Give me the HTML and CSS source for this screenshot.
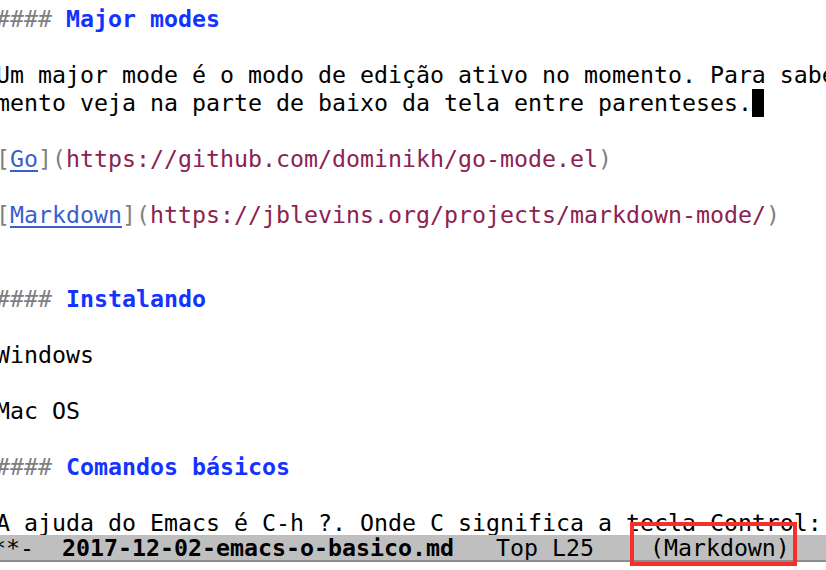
FILE: index.html
```html
<!DOCTYPE html>
<html lang="pt">
<head>
<meta charset="utf-8">
<title>emacs - markdown</title>
<link rel="stylesheet" href="styles.css">
</head>
<body>
<div class="frame">
  <div class="buffer">
    <div class="line"><span class="markup">####</span> <span class="heading">Major modes</span></div>
    <div class="line"> </div>
    <div class="line">Um major mode é o modo de edição ativo no momento. Para saber qual o major mode ativo no mo</div>
    <div class="line">mento veja na parte de baixo da tela entre parenteses.<span class="cursor"></span></div>
    <div class="line"> </div>
    <div class="line"><span class="markup">[</span><span class="link">Go</span><span class="markup">](</span><span class="url">https://github.com/dominikh/go-mode.el</span><span class="markup">)</span></div>
    <div class="line"> </div>
    <div class="line"><span class="markup">[</span><span class="link">Markdown</span><span class="markup">](</span><span class="url">https://jblevins.org/projects/markdown-mode/</span><span class="markup">)</span></div>
    <div class="line"> </div>
    <div class="line"> </div>
    <div class="line"><span class="markup">####</span> <span class="heading">Instalando</span></div>
    <div class="line"> </div>
    <div class="line">Windows</div>
    <div class="line"> </div>
    <div class="line">Mac OS</div>
    <div class="line"> </div>
    <div class="line"><span class="markup">####</span> <span class="heading">Comandos básicos</span></div>
    <div class="line"> </div>
    <div class="line">A ajuda do Emacs é C-h ?. Onde C significa a tecla Control: Ctrl</div>
  </div>
  <div class="modeline"><span class="ml-text">-:**-  <b class="bufname">2017-12-02-emacs-o-basico.md</b>   Top L25    (Markdown)</span></div>
  <div class="highlight"></div>
</div>
</body>
</html>
```
FILE: styles.css
```css
html, body {
  margin: 0;
  padding: 0;
  background: #ffffff;
  overflow: hidden;
}

.frame {
  position: relative;
  width: 826px;
  height: 570px;
  overflow: hidden;
  font-family: "DejaVu Sans Mono", "Liberation Mono", monospace;
  font-size: 23.25px;
  color: #000000;
}

.buffer {
  box-sizing: border-box;
  height: 535px;
  padding-top: 5px;
  margin-left: -4px;
  overflow: hidden;
}

.line {
  height: 28px;
  line-height: 28px;
  white-space: pre;
}

.markup {
  color: #7f7f7f;
}

.heading {
  color: #1533ff;
  font-weight: bold;
}

.link {
  color: #3a5fcd;
  text-decoration: underline;
  text-underline-offset: 3px;
}

.url {
  color: #8b2252;
}

.cursor {
  display: inline-block;
  width: 12px;
  height: 28px;
  background: #000000;
  vertical-align: top;
}

.modeline {
  height: 25px;
  line-height: 25px;
  background: #bfbfbf;
  border-bottom: 2px solid #8c8c8c;
  white-space: pre;
  overflow: hidden;
}

.ml-text {
  display: block;
  margin-left: -36px;
}

.bufname {
  font-weight: bold;
}

.highlight {
  position: absolute;
  left: 630px;
  top: 522px;
  width: 159px;
  height: 36px;
  border: 4px solid #f5302a;
}
```
